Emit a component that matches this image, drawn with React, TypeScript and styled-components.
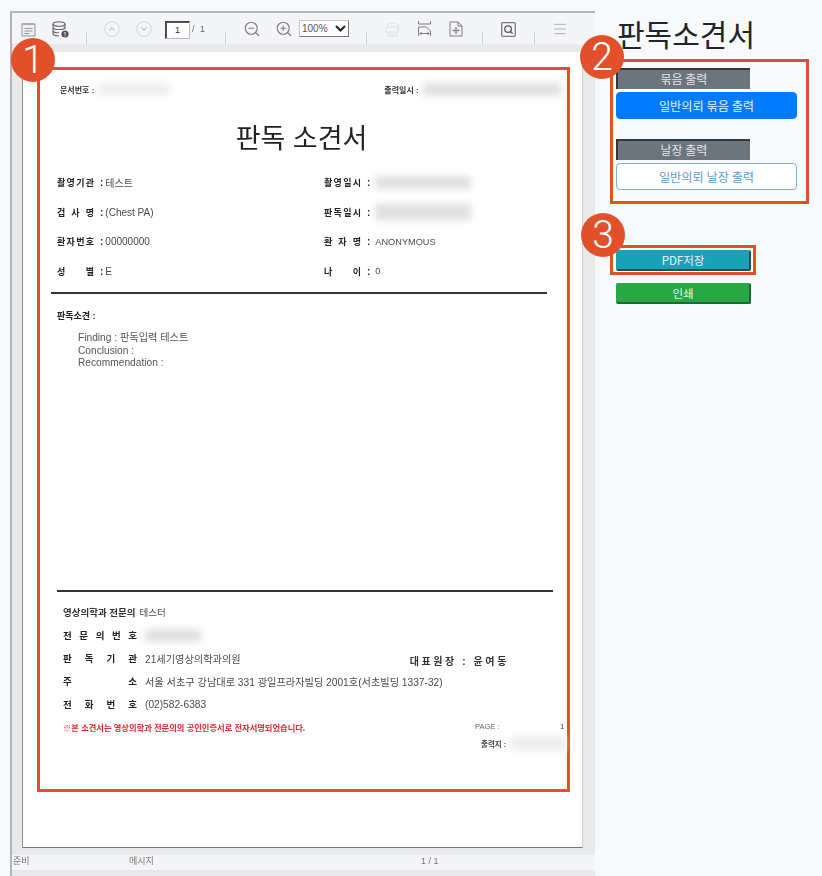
import React from "react";
import styled, { createGlobalStyle } from "styled-components";
import { ChevronUp, ChevronDown, ZoomIn, ZoomOut, Menu, Search } from "lucide-react";

const KR = `"Liberation Sans", "Noto Sans CJK KR", sans-serif`;

const selectArrow = `url("data:image/svg+xml,%3Csvg xmlns='http://www.w3.org/2000/svg' width='11' height='7'%3E%3Cpath d='M1 1l4.5 4.5L10 1' fill='none' stroke='%23222' stroke-width='2'/%3E%3C/svg%3E")`;

const GlobalStyle = createGlobalStyle`
  html, body { margin: 0; padding: 0; background: #f8f9fa; }
  body { font-family: "Noto Sans CJK KR", "Noto Sans", sans-serif; }
`;

const Page = styled.div`
  position: relative;
  width: 822px;
  height: 876px;
  overflow: hidden;
  display: flex;
  align-items: flex-start;
  padding: 11px 0 0 10px;
  box-sizing: border-box;
`;

const Viewer = styled.section`
  width: 585px;
  height: 865px;
  flex: none;
  box-sizing: border-box;
  background: #e9e9e9;
  border-top: 2px solid #b4b4b4;
  border-left: 2px solid #b4b4b4;
`;

const Toolbar = styled.div`
  height: 31px;
  display: flex;
  background: #f4f5f9;
  color: #8a8a8a;
`;

const Group = styled.div<{ $w: number; $pad?: number }>`
  width: ${(p) => p.$w}px;
  padding-left: ${(p) => p.$pad ?? 9}px;
  box-sizing: border-box;
  flex: none;
  display: flex;
  align-items: flex-start;
  height: 25px;
`;

const Sep = styled.span`
  width: 1px;
  height: 12px;
  margin-top: 19px;
  flex: none;
  background: #cfd1d4;
`;

const Slot = styled.span<{ $faint?: boolean }>`
  width: 32px;
  height: 22px;
  margin-top: 5px;
  flex: none;
  display: flex;
  align-items: center;
  justify-content: center;
  color: ${(p) => (p.$faint ? "#dfe1e3" : "#7c7c7c")};
`;

const PageInput = styled.input`
  width: 25px;
  height: 18px;
  margin: 8px 0 0 5px;
  padding: 0;
  box-sizing: border-box;
  border-style: solid;
  border-width: 1px;
  border-color: #444 #bbb #bbb #444;
  box-shadow: inset 1px 1px 0 #555;
  background: #fff;
  text-align: center;
  font: 9px ${KR};
  color: #333;
`;

const PageTotal = styled.span`
  margin: 11px 0 0 2px;
  font: 9px ${KR};
  word-spacing: 3px;
  color: #666;
  filter: blur(0.2px);
`;

const ZoomSelect = styled.select`
  appearance: none;
  width: 50px;
  height: 17px;
  margin: 7px 0 0 -1px;
  padding: 0 0 0 2px;
  box-sizing: border-box;
  border: 1px solid #c9c9c9;
  border-right-color: #777;
  border-bottom-color: #777;
  border-radius: 0;
  background: #fff ${selectArrow} no-repeat right 2px center;
  font: 10px ${KR};
  color: #555;
`;

const Paper = styled.div`
  width: 561px;
  height: 796px;
  margin: 8px 0 0 10px;
  padding: 15px 0 0 14px;
  box-sizing: border-box;
  background: #fff;
  border-left: 1px solid #8f8f8f;
  border-bottom: 1px solid #777;
  border-right: 1px solid #cfcfcf;
`;

const Highlight = styled.div`
  border: 3px solid #e2502b;
  box-sizing: border-box;
`;

const DocFrame = styled(Highlight)`
  width: 533px;
  height: 725px;
  font: 10px ${KR};
  color: #4a4a4a;
`;

const DocBody = styled.div`
  filter: blur(0.25px);
`;

const Redacted = styled.span<{ $w: number; $h?: number; $dark?: boolean }>`
  display: inline-block;
  flex: none;
  width: ${(p) => p.$w}px;
  height: ${(p) => p.$h ?? 12}px;
  background: ${(p) => (p.$dark ? "#e0e0e0" : "#eeeeee")};
  filter: blur(3.5px);
`;

const DocHeader = styled.div`
  height: 18px;
  margin-top: 10px;
  display: flex;
  align-items: center;
  font-size: 8px;
  font-weight: 700;
  color: #333;
`;

const HeaderCell = styled.span<{ $left: number }>`
  margin-left: ${(p) => p.$left}px;
  display: flex;
  align-items: center;
  gap: 4px;
  white-space: nowrap;
`;

const DocTitle = styled.h1`
  margin: 21px 0 0;
  height: 40px;
  text-align: center;
  padding-right: 4px;
  font: 400 27px/40px ${KR};
  color: #222;
`;

const InfoGrid = styled.div`
  margin: 9px 0 0 17px;
  display: grid;
  grid-template-columns: 267px 1fr;
  grid-auto-rows: 29.5px;
`;

const InfoRow = styled.div`
  display: flex;
  align-items: center;
  white-space: nowrap;
`;

const InfoLabel = styled.span`
  width: 37px;
  display: flex;
  justify-content: space-between;
  font-weight: 700;
  font-size: 9px;
  color: #222;
`;

const Colon = styled.b<{ $after?: number }>`
  margin: 0 ${(p) => p.$after ?? 2}px 0 6px;
  color: #222;
`;

const SmallValue = styled.span`
  font-size: 9.2px;
`;

const Rule = styled.hr<{ $left: number; $top: number }>`
  width: 496px;
  height: 2px;
  margin: ${(p) => p.$top}px 0 0 ${(p) => p.$left}px;
  border: 0;
  background: #333;
`;

const FindingTitle = styled.div`
  height: 16px;
  line-height: 16px;
  margin: 14px 0 0 17px;
  font-size: 9px;
  font-weight: 700;
  color: #222;
`;

const FindingLines = styled.div`
  margin: 8px 0 0 38px;
  line-height: 12.5px;
  font-size: 10.2px;
  color: #555;
`;

const SignRow = styled.div`
  height: 23px;
  margin-left: 23px;
  display: flex;
  align-items: center;
  white-space: nowrap;
  font-size: 10.2px;
`;

const SignLabel = styled.span`
  width: 74px;
  margin-right: 8px;
  display: flex;
  justify-content: space-between;
  font-size: 9.5px;
  font-weight: 700;
  color: #222;
`;

const Director = styled.b`
  margin-left: 169px;
  margin-top: 4px;
  font-size: 10px;
  letter-spacing: 2.6px;
  color: #333;
`;

const SignFirst = styled.div`
  margin: 9px 0 0 23px;
  height: 23px;
  display: flex;
  align-items: center;
  gap: 4px;
  white-space: nowrap;
  font-size: 9.5px;
  b { color: #333; }
`;

const NoticeRow = styled.div`
  height: 16px;
  margin: 3px 0 0 23px;
  display: flex;
  align-items: center;
  white-space: nowrap;
  font-size: 8px;
`;

const Notice = styled.b`
  width: 412px;
  font-size: 8.25px;
  color: #e0262c;
`;

const PageLabel = styled.span`
  width: 85px;
  font-size: 7.5px;
  color: #666;
`;

const PrintRow = styled.div`
  height: 18px;
  margin: 0 0 0 441px;
  display: flex;
  align-items: center;
  gap: 5px;
  font-size: 7.5px;
  font-weight: 700;
  color: #444;
`;

const StatusBar = styled.footer`
  height: 15px;
  margin-top: 7px;
  display: grid;
  grid-template-columns: 116px 292px 1fr;
  padding-left: 1px;
  background: #f4f5f9;
  font: 9px/13px ${KR};
  color: #777;
  span { filter: blur(0.2px); }
`;

const Sidebar = styled.aside`
  width: 215px;
  margin-left: 15px;
  flex: none;
  display: flex;
  flex-direction: column;
  align-items: flex-start;
`;

const Heading = styled.h2`
  margin: 0 0 0 7px;
  height: 48px;
  font: 400 30px/44px "Noto Sans CJK KR", sans-serif;
  color: #212529;
  white-space: nowrap;
`;

const PrintBox = styled(Highlight)`
  width: 199px;
  height: 145px;
  padding: 6px 0 0 3px;
`;

const Caption = styled.div<{ $top?: number }>`
  width: 134px;
  height: 21px;
  margin-top: ${(p) => p.$top ?? 0}px;
  box-sizing: border-box;
  background: #6c757d;
  border-top: 2px solid #33383d;
  border-left: 2px solid #33383d;
  color: #e2e4e6;
  text-align: center;
  font-size: 12px;
  line-height: 18px;
`;

const WideButton = styled.button<{ $outline?: boolean }>`
  display: block;
  width: 181px;
  height: 27px;
  margin-top: 3px;
  padding: 0;
  box-sizing: border-box;
  border: 1px solid ${(p) => (p.$outline ? "#7fb3d5" : "#007bff")};
  border-radius: 4px;
  background: ${(p) => (p.$outline ? "#fff" : "#007bff")};
  color: ${(p) => (p.$outline ? "#5a9bd0" : "#e6f1ff")};
  font: 12.2px "Noto Sans CJK KR", sans-serif;
`;

const PdfBox = styled(Highlight)`
  width: 146px;
  height: 30px;
  margin-top: 41px;
  padding: 2px 0 0 3px;
`;

const ActionButton = styled.button<{ $bg: string }>`
  display: block;
  width: 135px;
  height: 21px;
  padding: 0;
  box-sizing: border-box;
  border: 1px solid ${(p) => p.$bg};
  border-right: 2px solid #1f4f57;
  border-bottom: 2px solid #1f4f57;
  border-radius: 2px;
  background: ${(p) => p.$bg};
  color: #e8f4f6;
  font: 11.5px/17px "Noto Sans CJK KR", sans-serif;
`;

const PrintButton = styled(ActionButton)`
  margin: 8px 0 0 6px;
  border-right-color: #1b6b30;
  border-bottom-color: #1b6b30;
`;

const Marker = styled.span<{ $x: number; $y: number }>`
  position: absolute;
  left: ${(p) => p.$x - 22}px;
  top: ${(p) => p.$y - 22}px;
  width: 44px;
  height: 44px;
  border-radius: 50%;
  background: #e2502b;
  color: #fff;
  display: flex;
  align-items: center;
  justify-content: center;
  font: 300 39px/44px Roboto, "Liberation Sans", sans-serif;
`;

function NotepadIcon() {
  return (
    <svg width="15" height="15" viewBox="0 0 15 15" fill="none" stroke="#8c8c8c" strokeWidth="0.9">
      <rect x="1" y="2" width="13" height="12" fill="#f0f0f0" />
      <path d="M2 1v2M4 1v2M6 1v2M8 1v2M10 1v2M12 1v2" />
      <path d="M3.5 6.5h8M3.5 9h8M3.5 11.5h5" />
    </svg>
  );
}

function DatabaseIcon() {
  return (
    <svg width="17" height="17" viewBox="0 0 17 17" fill="none" stroke="#666" strokeWidth="1.1">
      <ellipse cx="7" cy="3" rx="6" ry="2.3" fill="#eee" />
      <path d="M1 3v9.5c0 1.3 2.7 2.3 6 2.3M13 3v5M1 6.2c0 1.3 2.7 2.3 6 2.3s6-1 6-2.3M1 9.4c0 1.3 2.7 2.3 6 2.3" />
      <circle cx="13" cy="13" r="3.6" fill="#555" stroke="none" />
      <path d="M13 11v2.6M13 14.6v.8" stroke="#fff" strokeWidth="1" />
    </svg>
  );
}

function CircleChevron({ up }: { up?: boolean }) {
  const Icon = up ? ChevronUp : ChevronDown;
  return (
    <svg width="16" height="16" viewBox="0 0 16 16" fill="none" stroke="#d3d6d8" strokeWidth="1">
      <circle cx="8" cy="8" r="7.3" />
      <Icon x="3" y="3" width="10" height="10" strokeWidth="1.6" />
    </svg>
  );
}

function PageSaveIcon() {
  return (
    <svg width="15" height="15" viewBox="0 0 15 15" fill="none" stroke="currentColor" strokeWidth="1">
      <path d="M3 1h8l3 3v5M3 1v3M1 5h12v5H1zM3 10v4h9v-4M5 12h5" />
    </svg>
  );
}

function FitWidthIcon() {
  return (
    <svg width="15" height="16" viewBox="0 0 15 16" fill="none" stroke="currentColor" strokeWidth="1">
      <path d="M1.5 0v3h12V0M1.5 15V6h8l4 4v5" />
      <path d="M3 12.5h9M4.5 11l-1.5 1.5L4.5 14M10.5 11l1.5 1.5L10.5 14" />
    </svg>
  );
}

function FitPageIcon() {
  return (
    <svg width="14" height="16" viewBox="0 0 14 16" fill="none" stroke="currentColor" strokeWidth="1">
      <path d="M1 1h8l4 4v10H1zM9 1v4h4" />
      <path d="M7 6.5v6M4 9.5h6M6 7.5l1-1 1 1M6 11.5l1 1 1-1M5 8.5l-1 1 1 1M9 8.5l1 1-1 1" />
    </svg>
  );
}

function SearchBoxIcon() {
  return (
    <svg width="15" height="15" viewBox="0 0 15 15" fill="none" stroke="currentColor" strokeWidth="1.3">
      <rect x="0.7" y="0.7" width="13.6" height="13.6" rx="1" />
      <Search x="2.5" y="2.5" width="10" height="10" strokeWidth="3" color="#555" />
    </svg>
  );
}

function Spaced({ text }: { text: string }) {
  return (
    <>
      {Array.from(text).map((ch, i) => (
        <span key={i}>{ch}</span>
      ))}
    </>
  );
}

const info: [string, React.ReactNode, string, React.ReactNode][] = [
  ["촬영기관", "테스트", "촬영일시", <Redacted $w={96} $h={13} $dark />],
  ["검사명", "(Chest PA)", "판독일시", <Redacted $w={96} $h={16} $dark />],
  ["환자번호", "00000000", "환자명", <SmallValue>ANONYMOUS</SmallValue>],
  ["성별", "E", "나이", <SmallValue>0</SmallValue>],
];

export default function App() {
  return (
    <Page>
      <GlobalStyle />
      <Viewer>
        <Toolbar>
          <Group $w={74} $pad={0}>
            <Slot><NotepadIcon /></Slot>
            <Slot><DatabaseIcon /></Slot>
          </Group>
          <Sep />
          <Group $w={138}>
            <Slot><CircleChevron up /></Slot>
            <Slot><CircleChevron /></Slot>
            <PageInput readOnly value="1" />
            <PageTotal>/ 1</PageTotal>
          </Group>
          <Sep />
          <Group $w={140} $pad={10}>
            <Slot><ZoomOut size={18} strokeWidth={1.5} /></Slot>
            <Slot><ZoomIn size={18} strokeWidth={1.5} /></Slot>
            <ZoomSelect defaultValue="100%">
              <option>100%</option>
            </ZoomSelect>
          </Group>
          <Sep />
          <Group $w={115}>
            <Slot $faint><PageSaveIcon /></Slot>
            <Slot><FitWidthIcon /></Slot>
            <Slot><FitPageIcon /></Slot>
          </Group>
          <Sep />
          <Group $w={51}>
            <Slot><SearchBoxIcon /></Slot>
          </Group>
          <Sep />
          <Group $w={48}>
            <Slot><Menu size={16} strokeWidth={0.9} /></Slot>
          </Group>
        </Toolbar>
        <Paper>
          <DocFrame>
            <DocBody>
              <DocHeader>
                <HeaderCell $left={20}>문서번호 : <Redacted $w={72} /></HeaderCell>
                <HeaderCell $left={214}>출력일시 : <Redacted $w={138} $h={13} $dark /></HeaderCell>
              </DocHeader>
              <DocTitle>판독 소견서</DocTitle>
              <InfoGrid>
                {info.map(([a, av, b, bv]) => (
                  <React.Fragment key={a}>
                    <InfoRow>
                      <InfoLabel><Spaced text={a} /></InfoLabel>
                      <Colon>:</Colon>
                      {av}
                    </InfoRow>
                    <InfoRow>
                      <InfoLabel><Spaced text={b} /></InfoLabel>
                      <Colon $after={5}>:</Colon>
                      {bv}
                    </InfoRow>
                  </React.Fragment>
                ))}
              </InfoGrid>
              <Rule $left={11} $top={6} />
              <FindingTitle>판독소견 :</FindingTitle>
              <FindingLines>
                Finding : 판독입력 테스트
                <br />
                Conclusion :
                <br />
                Recommendation :
              </FindingLines>
              <Rule $left={17} $top={220} />
              <SignFirst>
                <b>영상의학과 전문의</b> 테스터
              </SignFirst>
              <SignRow>
                <SignLabel><Spaced text="전문의번호" /></SignLabel>
                <Redacted $w={56} $h={13} $dark />
              </SignRow>
              <SignRow>
                <SignLabel><Spaced text="판독기관" /></SignLabel>
                21세기영상의학과의원
                <Director>대표원장 : 윤여동</Director>
              </SignRow>
              <SignRow>
                <SignLabel><Spaced text="주소" /></SignLabel>
                서울 서초구 강남대로 331 광일프라자빌딩 2001호(서초빌딩 1337-32)
              </SignRow>
              <SignRow>
                <SignLabel><Spaced text="전화번호" /></SignLabel>
                (02)582-6383
              </SignRow>
              <NoticeRow>
                <Notice>※본 소견서는 영상의학과 전문의의 공인인증서로 전자서명되었습니다.</Notice>
                <PageLabel>PAGE :</PageLabel>
                <span>1</span>
              </NoticeRow>
              <PrintRow>
                출력지 : <Redacted $w={54} $h={15} />
              </PrintRow>
            </DocBody>
          </DocFrame>
        </Paper>
        <StatusBar>
          <span>준비</span>
          <span>메시지</span>
          <span>1 / 1</span>
        </StatusBar>
      </Viewer>
      <Sidebar>
        <Heading>판독소견서</Heading>
        <PrintBox>
          <Caption>묶음 출력</Caption>
          <WideButton>일반의뢰 묶음 출력</WideButton>
          <Caption $top={20}>날장 출력</Caption>
          <WideButton $outline>일반의뢰 날장 출력</WideButton>
        </PrintBox>
        <PdfBox>
          <ActionButton $bg="#17a2b8">PDF저장</ActionButton>
        </PdfBox>
        <PrintButton $bg="#28a745">인쇄</PrintButton>
      </Sidebar>
      <Marker $x={33} $y={60}>1</Marker>
      <Marker $x={602} $y={57}>2</Marker>
      <Marker $x={603} $y={235}>3</Marker>
    </Page>
  );
}
